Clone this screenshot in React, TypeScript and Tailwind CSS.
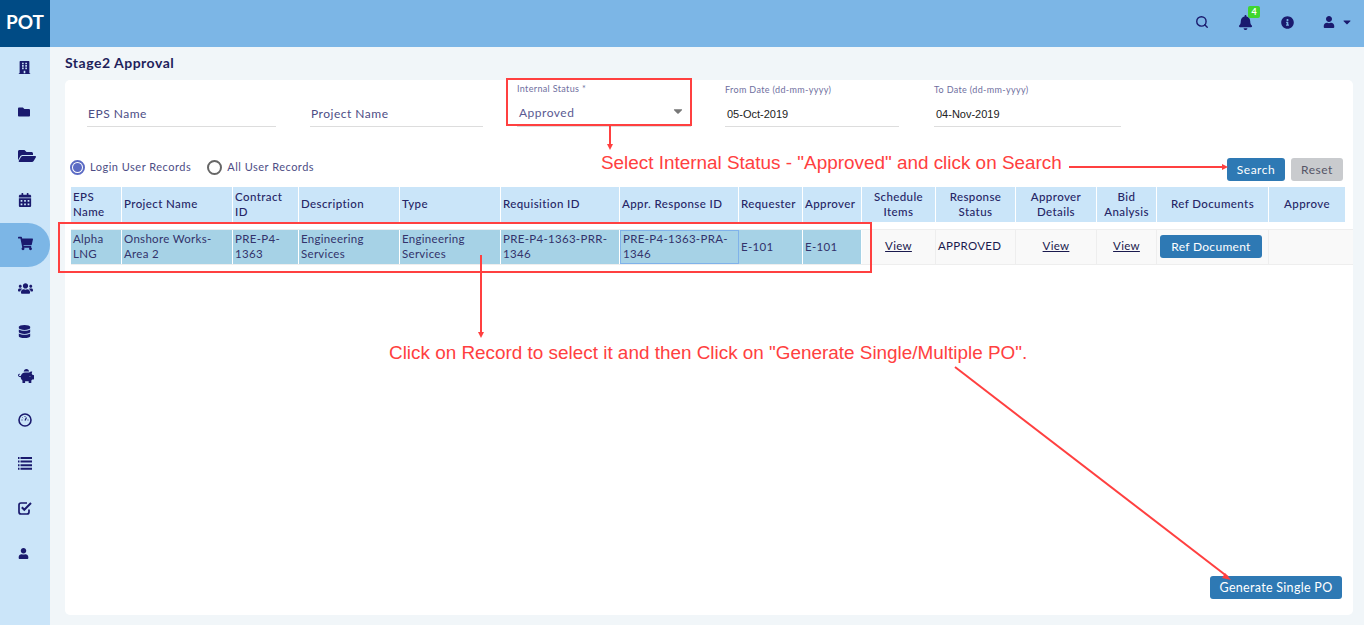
import { Search } from 'lucide-react';
import {
  FaBell,
  FaBuilding,
  FaCalendarAlt,
  FaCaretDown,
  FaDatabase,
  FaFolder,
  FaFolderOpen,
  FaInfoCircle,
  FaPiggyBank,
  FaShoppingCart,
  FaUser,
  FaUsers,
} from 'react-icons/fa';

const GaugeIcon = () => (
  <svg width="14" height="14" viewBox="0 0 14 14" fill="none">
    <circle cx="7" cy="7" r="6" stroke="#1a1a6e" strokeWidth="1.6" />
    <path d="M7 7.5 8.5 4.5" stroke="#1a1a6e" strokeWidth="1.2" />
    <path d="M3.5 7h1M9.5 7h1M7 3v1M4.5 4.5l.6.6" stroke="#1a1a6e" strokeWidth="0.9" />
  </svg>
);

const ListIcon = () => (
  <svg width="14" height="13" viewBox="0 0 14 13" fill="#1a1a6e">
    <path d="M0 0h1.5v2H0zM2.5 0H14v2H2.5zM0 3.6h1.5v2H0zM2.5 3.6H14v2H2.5zM0 7.2h1.5v2H0zM2.5 7.2H14v2H2.5zM0 10.8h1.5v2H0zM2.5 10.8H14v2H2.5z" />
  </svg>
);

const CheckIcon = () => (
  <svg width="14" height="14" viewBox="0 0 14 14" fill="none" stroke="#1a1a6e">
    <path d="M11 8.5V11a2 2 0 0 1-2 2H3a2 2 0 0 1-2-2V4a2 2 0 0 1 2-2h6" strokeWidth="1.7" />
    <path d="M3.8 6.3 6.3 8.8 13 2" strokeWidth="2" />
  </svg>
);

const navIcons = [
  <FaBuilding key="a" size={13} />,
  <FaFolder key="b" size={12} />,
  <FaFolderOpen key="c" size={18} />,
  <FaCalendarAlt key="d" size={14} />,
  <FaShoppingCart key="e" size={15} />,
  <FaUsers key="f" size={15} className="mt-[2px]" />,
  <FaDatabase key="g" size={13} />,
  <FaPiggyBank key="h" size={16} />,
  <GaugeIcon key="i" />,
  <ListIcon key="j" />,
  <CheckIcon key="k" />,
  <FaUser key="l" size={11} className="mt-[4px]" />,
];

const columns = 'grid grid-cols-[51px_111px_66px_101px_101px_119px_119px_64px_59px_74px_80px_81px_60px_112px_77px]';

const headers = [
  { label: 'EPS Name' },
  { label: 'Project Name' },
  { label: 'Contract ID' },
  { label: 'Description' },
  { label: 'Type' },
  { label: 'Requisition ID' },
  { label: 'Appr. Response ID' },
  { label: 'Requester' },
  { label: 'Approver' },
  { label: 'Schedule Items', center: true },
  { label: 'Response Status', center: true },
  { label: 'Approver Details', center: true },
  { label: 'Bid Analysis', center: true },
  { label: 'Ref Documents', center: true },
  { label: 'Approve', center: true },
];

const selectedCells = [
  'Alpha LNG',
  'Onshore Works-Area 2',
  'PRE-P4-1363',
  'Engineering Services',
  'Engineering Services',
  'PRE-P4-1363-PRR-1346',
  'PRE-P4-1363-PRA-1346',
  'E-101',
  'E-101',
];

const ViewCell = () => (
  <div className="flex items-center justify-center border-r border-[#eeeeee] pb-[3px]">
    <span className="underline text-[#1a1a4e]">View</span>
  </div>
);

const Field = ({ label, className }: { label: string; className: string }) => (
  <div className={`h-[26px] border-b border-[#dddddd] pl-[1px] pt-[4px] text-[12px] tracking-[0.5px] text-[#4d4d85] ${className}`}>
    {label}
  </div>
);

const DateField = ({ label, value, className }: { label: string; value: string; className: string }) => (
  <div className={`flex flex-col ${className}`}>
    <span className="mb-[5px] text-[9px] leading-[13px] tracking-[0.35px] text-[#6f6fa0]">{label}</span>
    <div className="h-[26px] border-b border-[#dddddd] pl-[2px] pt-[5px] font-['Liberation_Sans',sans-serif] text-[11px] text-[#222222]">
      {value}
    </div>
  </div>
);

export default function App() {
  return (
    <div className="relative flex h-screen flex-col overflow-hidden bg-[#f1f6f9] font-['Lato',sans-serif]">
      {/* top bar */}
      <header className="flex h-[47px] shrink-0 items-center bg-[#7cb6e6] text-[#1a1a6e]">
        <div className="flex h-full w-[50px] items-center justify-center bg-[#004b85] pb-[3px] text-[19px] font-bold text-white">POT</div>
        <div className="ml-auto flex items-center pb-[3px] pr-[11px]">
          <Search size={14} strokeWidth={2.4} className="mr-[29px]" />
          <div className="relative mr-[28px]">
            <FaBell size={15} />
            <span className="absolute left-[10px] top-[-9px] flex h-[12px] w-[12px] items-center justify-center rounded-[2px] bg-[#3fd62f] text-[9px] font-bold text-white">4</span>
          </div>
          <FaInfoCircle size={13} className="mr-[29px]" />
          <FaUser size={12} className="mr-[6px]" />
          <FaCaretDown size={12} />
        </div>
      </header>

      <div className="flex min-h-0 flex-1">
        {/* side nav */}
        <nav className="w-[50px] shrink-0 bg-[#cbe5f9] text-[#1a1a6e]">
          {navIcons.map((icon, i) => (
            <div
              key={i}
              className={
                i === 4
                  ? 'flex h-[44px] items-center rounded-r-full bg-[#7cb6e6] pb-[3px] pl-[18px]'
                  : 'flex h-[44px] items-center pb-[3px] pl-[18px]'
              }
            >
              {icon}
            </div>
          ))}
        </nav>

        <main className="flex min-w-0 flex-1 flex-col pl-[15px] pr-[11px]">
          <h1 className="h-[33px] pt-[7px] text-[14px] font-bold leading-[18px] tracking-[0.5px] text-[#1f1f5c]">Stage2 Approval</h1>

          <section className="flex h-[535px] flex-col rounded-[5px] bg-white pl-[5px]">
            {/* filters */}
            <div className="flex h-[47px] items-end pl-[17px]">
              <Field label="EPS Name" className="w-[189px]" />
              <Field label="Project Name" className="ml-[34px] w-[173px]" />
              <div className="ml-[34px] flex w-[174px] flex-col">
                <span className="mb-[5px] text-[9px] leading-[13px] tracking-[0.35px] text-[#6f6fa0]">Internal Status *</span>
                <div className="flex h-[27px] items-start justify-between border-b border-[#dddddd] pl-[2px] pr-[6px] pt-[4px] text-[12px] tracking-[0.5px] text-[#5a5a92]">
                  <span>Approved</span>
                  <FaCaretDown size={14} className="text-[#777777]" />
                </div>
              </div>
              <DateField label="From Date (dd-mm-yyyy)" value="05-Oct-2019" className="ml-[34px] w-[174px]" />
              <DateField label="To Date (dd-mm-yyyy)" value="04-Nov-2019" className="ml-[35px] w-[187px]" />
            </div>

            {/* radios and actions */}
            <div className="mt-[31px] flex h-[23px] items-start pr-[10px] text-[11px] tracking-[0.5px] text-[#4d4d85]">
              <div className="flex h-[18px] items-center">
                <span className="flex h-[15px] w-[15px] items-center justify-center rounded-full border-2 border-[#5b6bc4]">
                  <span className="h-[9px] w-[9px] rounded-full bg-[#5b6bc4]" />
                </span>
                <span className="ml-[5px]">Login User Records</span>
                <span className="ml-[16px] h-[15px] w-[15px] rounded-full border-2 border-[#666666]" />
                <span className="ml-[5px]">All User Records</span>
              </div>
              <button className="ml-auto h-[23px] w-[58px] rounded-[3px] bg-[#2e79b4] text-[12px] text-white">Search</button>
              <button className="ml-[6px] h-[23px] w-[52px] rounded-[3px] bg-[#c9cbce] text-[12px] text-[#555566]">Reset</button>
            </div>

            {/* table */}
            <div className={`${columns} ml-[1px] mt-[6px] text-[11.5px] leading-[15px] tracking-[0.4px] text-[#262666]`}>
              {headers.map((h) => (
                <div
                  key={h.label}
                  className={
                    h.center
                      ? 'flex h-[35px] items-center justify-center border-r border-white bg-[#cae5f9] px-[2px] pb-[2px] text-center font-medium'
                      : 'flex h-[35px] items-center border-r border-white bg-[#cae5f9] px-[2px] pb-[2px] font-medium'
                  }
                >
                  {h.label}
                </div>
              ))}
            </div>
            <div className={`${columns} ml-[1px] mt-[7px] h-[36px] border-y border-[#eeeeee] bg-[#f9f9f9] text-[11.5px] leading-[15px] tracking-[0.3px] text-[#33336b]`}>
              {selectedCells.map((text, i) => (
                <div
                  key={i}
                  className={
                    i === 6
                      ? 'flex items-center border border-[#7fb2ea] bg-[#a6d2e6] px-[2px] pb-[2px]'
                      : 'flex items-center border-r border-white bg-[#a6d2e6] px-[2px] pb-[2px]'
                  }
                >
                  {text}
                </div>
              ))}
              <ViewCell />
              <div className="flex items-center border-r border-[#eeeeee] pb-[3px] pl-[2px] text-[#1a1a4e]">APPROVED</div>
              <ViewCell />
              <ViewCell />
              <div className="border-r border-[#eeeeee] pl-[3px] pt-[5px]">
                <button className="h-[23px] w-[102px] rounded-[3px] bg-[#2e79b4] text-[12px] text-white">Ref Document</button>
              </div>
              <div />
            </div>

            <div className="mt-auto flex justify-end pb-[16px] pr-[11px]">
              <button className="h-[23px] w-[132px] rounded-[3px] bg-[#2e79b4] pt-[2px] text-[12.5px] tracking-[0.3px] text-white">Generate Single PO</button>
            </div>
          </section>
        </main>
      </div>

      {/* annotations drawn over the page */}
      <div className="absolute left-[506px] top-[78px] h-[48px] w-[186px] border-2 border-[#ff4040]" />
      <div className="absolute left-[58px] top-[222px] h-[51px] w-[814px] border-2 border-[#ff4040]" />
      <svg className="absolute left-0 top-0" width="1364" height="625" fill="none">
        <path d="M610 126V145" stroke="#ff4040" strokeWidth="2" />
        <path d="M607 144h6l-3 6z" fill="#ff4040" />
        <path d="M1069 167H1222" stroke="#ff4040" strokeWidth="2" />
        <path d="M1222 164v6l6-3z" fill="#ff4040" />
        <path d="M481 255V332" stroke="#ff4040" strokeWidth="2" />
        <path d="M478 332h6l-3 6z" fill="#ff4040" />
        <path d="M955 367 1228 577" stroke="#ff4040" strokeWidth="2" />
        <path d="M1225 573l-3 5 9 2z" fill="#ff4040" />
      </svg>
      <span className="absolute left-[601px] top-[152px] whitespace-nowrap font-['Liberation_Sans',sans-serif] text-[18.9px] leading-[22px] text-[#ff4040]">
        Select Internal Status - "Approved" and click on Search
      </span>
      <span className="absolute left-[389px] top-[342px] whitespace-nowrap font-['Liberation_Sans',sans-serif] text-[18.9px] leading-[22px] text-[#ff4040]">
        Click on Record to select it and then Click on "Generate Single/Multiple PO".
      </span>
    </div>
  );
}
